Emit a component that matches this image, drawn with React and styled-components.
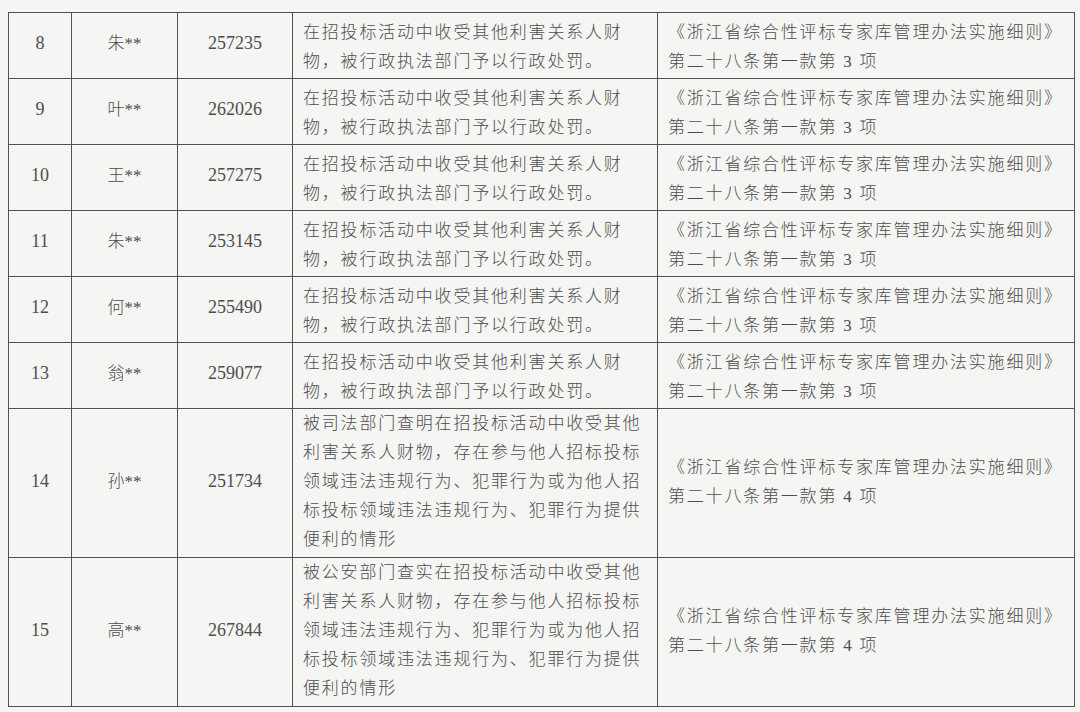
import React from 'react';
import styled, {createGlobalStyle} from 'styled-components';

const GlobalStyle = createGlobalStyle`
  html, body {
    margin: 0;
    padding: 0;
    background: #f5f5f3;
  }
`

const Page = styled.div`
  width: 1080px;
  height: 712px;
  overflow: hidden;
  padding: 12px 0 0 8px;
  box-sizing: border-box;
  background: #f5f5f3;
`

const Table = styled.table`
  border-collapse: collapse;
  table-layout: fixed;
  width: 1066px;
  color: #4d4d4d;
  font-family: "Liberation Serif", "Noto Sans CJK SC", serif;
  font-size: 17px;
  font-weight: 300;
`

const Col = styled.col`
  width: ${p => p.$w}px;
`

const Row = styled.tr`
  height: ${p => p.$h}px;
`

const Cell = styled.td`
  border: 1px solid #525252;
  padding: ${p => p.$text ? (p.$tall ? '0 8px 3px 10px' : '3px 8px 0 10px') : '0 0 4px 0'};
  text-align: ${p => p.$text ? 'left' : 'center'};
  vertical-align: middle;
  line-height: 29px;
  letter-spacing: ${p => p.$text ? '1.8px' : '0'};
  font-size: ${p => p.$num ? '18px' : '17px'};
  box-sizing: border-box;
`

const fine = '在招投标活动中收受其他利害关系人财物，被行政执法部门予以行政处罚。'
const law = (n) => `《浙江省综合性评标专家库管理办法实施细则》第二十八条第一款第 ${n} 项`

const cols = [63, 106, 115, 365, 417]

const rows = [
    {no: 8, name: '朱**', id: '257235', reason: fine, item: 3, h: 66},
    {no: 9, name: '叶**', id: '262026', reason: fine, item: 3, h: 66},
    {no: 10, name: '王**', id: '257275', reason: fine, item: 3, h: 66},
    {no: 11, name: '朱**', id: '253145', reason: fine, item: 3, h: 66},
    {no: 12, name: '何**', id: '255490', reason: fine, item: 3, h: 66},
    {no: 13, name: '翁**', id: '259077', reason: fine, item: 3, h: 66},
    {
        no: 14, name: '孙**', id: '251734', item: 4, h: 147,
        reason: '被司法部门查明在招投标活动中收受其他利害关系人财物，存在参与他人招标投标领域违法违规行为、犯罪行为或为他人招标投标领域违法违规行为、犯罪行为提供便利的情形',
    },
    {
        no: 15, name: '高**', id: '267844', item: 4, h: 148,
        reason: '被公安部门查实在招投标活动中收受其他利害关系人财物，存在参与他人招标投标领域违法违规行为、犯罪行为或为他人招标投标领域违法违规行为、犯罪行为提供便利的情形',
    },
]

function App() {
    return (
        <Page>
            <GlobalStyle/>
            <Table>
                <colgroup>
                    {cols.map((w, i) => <Col key={i} $w={w}/>)}
                </colgroup>
                <tbody>
                {rows.map(r => {
                    const tall = r.h > 100
                    return (
                        <Row key={r.no} $h={r.h}>
                            <Cell $num>{r.no}</Cell>
                            <Cell>{r.name}</Cell>
                            <Cell $num>{r.id}</Cell>
                            <Cell $text $tall={tall}>{r.reason}</Cell>
                            <Cell $text $tall={tall}>{law(r.item)}</Cell>
                        </Row>
                    )
                })}
                </tbody>
            </Table>
        </Page>
    );
}

export default App;
